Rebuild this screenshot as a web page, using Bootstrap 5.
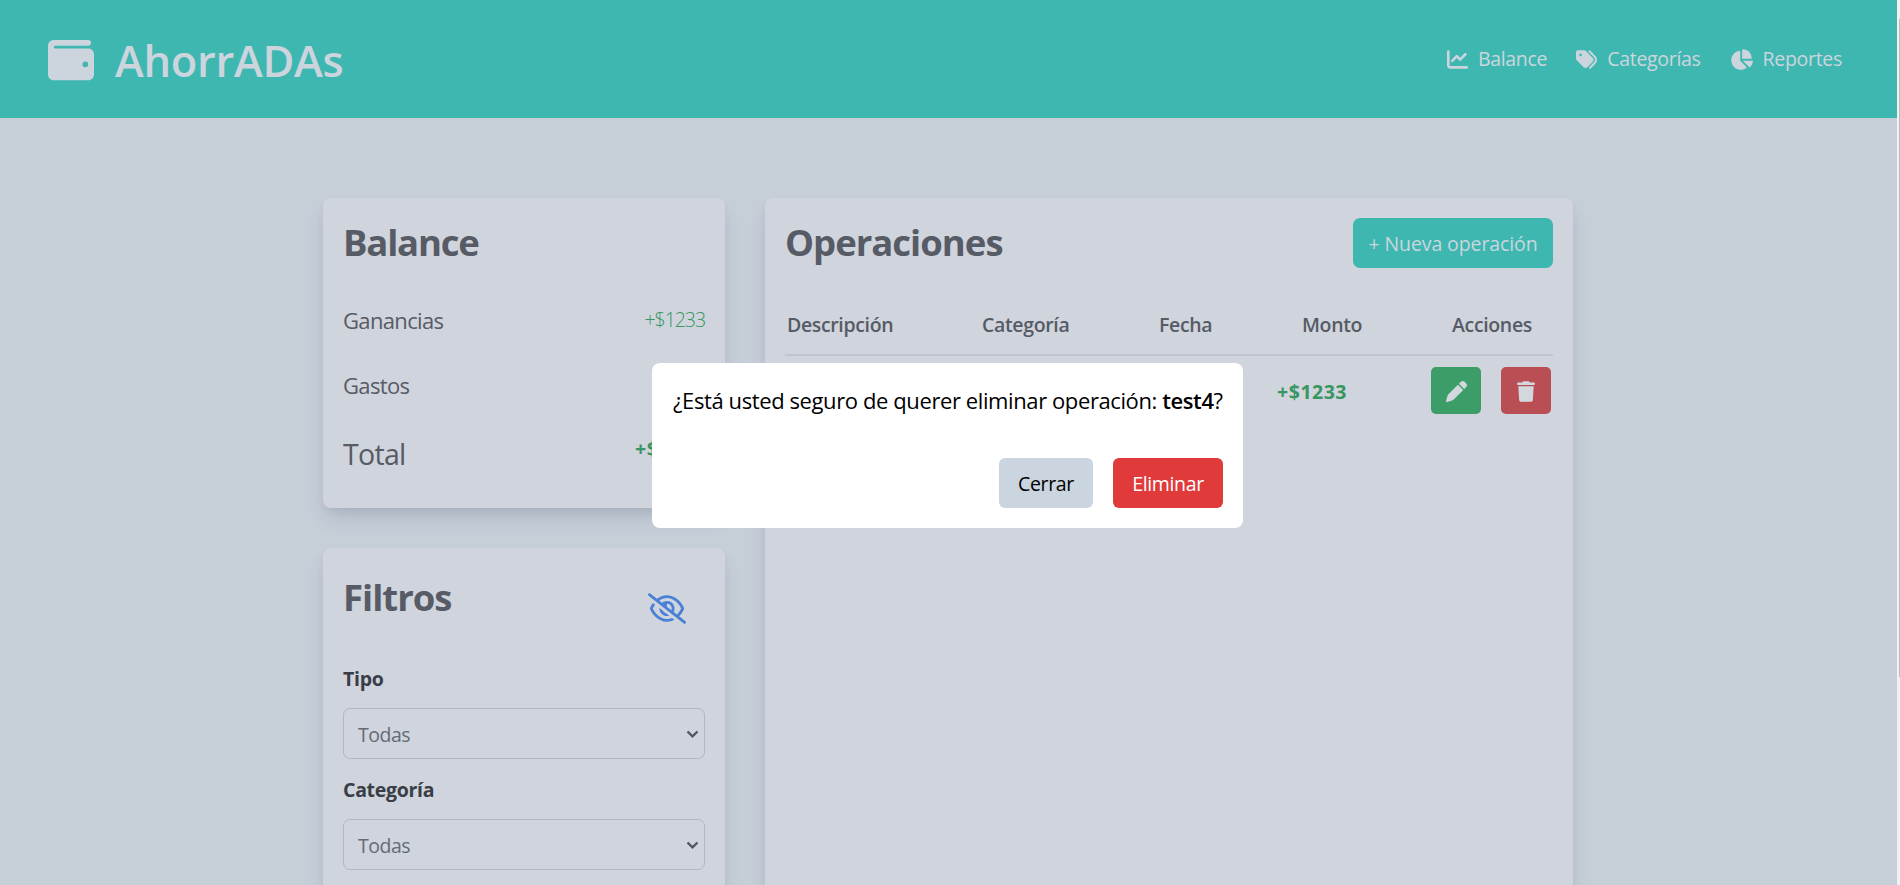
<!DOCTYPE html>
<html lang="es">
<head>
<meta charset="utf-8">
<meta name="viewport" content="width=device-width, initial-scale=1">
<title>AhorrADAs</title>
<link href="https://cdn.jsdelivr.net/npm/bootstrap@5.3.0/dist/css/bootstrap.min.css" rel="stylesheet">
<style>
  body { height: 885px; overflow: hidden; background: #c6ced8; color: #565b66; font-family: "Open Sans", "Noto Sans", sans-serif; font-size: 19.5px; line-height: 30px; letter-spacing: -.3px; white-space: nowrap; }
  svg { fill: currentColor; display: block; flex: none; }
  .page { width: 1897px; height: 885px; overflow: hidden; }
  .topbar { height: 118px; background: #3fb7b1; color: #ccd5dd; padding: 0 55px 0 48px; }
  .wallet { margin-top: 2px; }
  .brand-name { font-size: 43.5px; line-height: 60px; font-weight: 600; letter-spacing: -.3px; margin: 3px 0 0 21px; }
  .links { gap: 29px; }
  .links a { color: inherit; text-decoration: none; gap: 10px; }
  .main { padding: 80px 324px 0 323px; gap: 40px; }
  .side { width: 402px; gap: 40px; }
  .panel { background: #d0d4dc; border-radius: 8px; padding: 20px; box-shadow: 0 12px 19px -4px rgba(70,85,105,.19), 0 5px 8px -2px rgba(70,85,105,.08); }
  .balance { height: 310px; }
  .filters { height: 400px; }
  .ops { height: 760px; }
  .title { font-size: 36.5px; line-height: 48px; height: 50px; font-weight: 700; letter-spacing: -1px; margin: 0; }
  .balance .title { letter-spacing: -1.2px; }
  .filters .title { line-height: 50px; }
  .line { font-size: 22px; line-height: 32px; height: 34px; letter-spacing: -.65px; margin-bottom: 31px; }
  .line-first { margin-top: 36px; }
  .line-total { line-height: 40px; height: 40px; margin-bottom: 0; }
  .total { font-size: 28.5px; letter-spacing: -.7px; }
  .amount { font-size: 19.5px; line-height: 30px; color: #379663; letter-spacing: .5px; font-weight: 700; }
  .thin { font-weight: 300; letter-spacing: -1.05px; line-height: 31px; }
  .filters-head { height: 96px; }
  .eye { color: #4a80d6; margin: 25px 19px 0 0; }
  .field-name { font-weight: 700; color: #383d47; line-height: 30px; margin-bottom: 14px; }
  .picker { height: 51px; border: 1px solid #b1b8c3; border-radius: 7px; padding: 2px 5px 0 14px; color: #656b76; letter-spacing: -.5px; margin-bottom: 16px; }
  .picker svg { margin-top: -2px; }
  .add { width: 200px; height: 50px; border-radius: 7px; background: #3fb7b1; color: #c9d6dd; border: 0; padding: 0; letter-spacing: -.1px; }
  .btn { font-size: 19.5px; line-height: 30px; padding: 1px 0 0; }
  .heads { display: grid; grid-template-columns: 195px 177px 143px 150px auto; padding: 7px 0 0 2px; margin-top: 35px; font-weight: 600; letter-spacing: -.35px; height: 53px; border-bottom: 2px solid #bec5d1; }
  .op-row { height: 70px; padding-right: 2px; }
  .op-row .amount { margin: 21px 84px 0 0; }
  .act { width: 50px; height: 47px; border-radius: 5px; color: #d3d8df; margin-top: 11px; padding-top: 1px; }
  .edit { background: #3d9d68; margin-right: 20px; }
  .trash { background: #b94e54; }
  .veil { padding: 6px 2px 0 0; width: 1897px; height: 885px; }
  .dialog-box { width: 591px; height: 165px; background: #fff; color: #000; border-radius: 8px; padding: 19px 20px 20px 20px; }
  .question { font-size: 22px; line-height: 36px; letter-spacing: -.4px; padding-left: 1px; }
  .question b { font-weight: 600; }
  .choices { gap: 20px; }
  .choice { height: 50px; border-radius: 6px; border: 0; letter-spacing: -.35px; }
  .close-btn { width: 94px; background: #cbd5e0; color: #000; }
  .del-btn { width: 110px; background: #e03a3a; color: #fff; }
  .rail { width: 3px; height: 885px; background: #f1f1f1; padding: 19px 0 0 2px; }
  .thumb { height: 658px; background: #bdbdbd; }
</style>
</head>
<body>
<div class="d-flex">
<div class="page flex-shrink-0">
  <header class="topbar d-flex justify-content-between align-items-center">
    <div class="d-flex align-items-center">
      <svg class="wallet" width="46" height="46" viewBox="0 0 512 512"><path d="M64 32C28.7 32 0 60.7 0 96V416c0 35.3 28.7 64 64 64H448c35.3 0 64-28.7 64-64V192c0-35.3-28.7-64-64-64H80c-8.8 0-16-7.2-16-16s7.2-16 16-16H448c17.7 0 32-14.3 32-32s-14.3-32-32-32H64zM416 272a32 32 0 1 1 0 64 32 32 0 1 1 0-64z"/></svg>
      <span class="brand-name">AhorrADAs</span>
    </div>
    <nav class="links d-flex align-items-center">
      <a href="#" class="d-flex align-items-center"><svg width="21" height="21" viewBox="0 0 512 512"><path d="M64 64c0-17.7-14.3-32-32-32S0 46.3 0 64V400c0 44.2 35.8 80 80 80H480c17.7 0 32-14.3 32-32s-14.3-32-32-32H80c-8.8 0-16-7.2-16-16V64zm406.6 86.6c12.5-12.5 12.5-32.8 0-45.3s-32.8-12.5-45.3 0L320 210.7l-57.4-57.4c-12.5-12.5-32.8-12.5-45.3 0l-112 112c-12.5 12.5-12.5 32.8 0 45.3s32.8 12.5 45.3 0L240 221.3l57.4 57.4c12.5 12.5 32.8 12.5 45.3 0l128-128z"/></svg><span>Balance</span></a>
      <a href="#" class="d-flex align-items-center"><svg width="21" height="21" viewBox="0 0 512 512"><path d="M345 39.1L472.8 168.4c52.4 53 52.4 138.2 0 191.2L360.8 472.9c-9.3 9.4-24.5 9.5-33.9 .2s-9.5-24.5-.2-33.9L438.6 325.9c33.9-34.3 33.9-89.4 0-123.7L310.9 72.9c-9.3-9.4-9.2-24.6 .2-33.9s24.6-9.2 33.9 .2zM0 229.5V80C0 53.5 21.5 32 48 32H197.5c17 0 33.3 6.7 45.3 18.7l168 168c25 25 25 65.5 0 90.5L277.3 442.7c-25 25-65.5 25-90.5 0l-168-168C6.7 262.7 0 246.5 0 229.5zM144 144a32 32 0 1 0 -64 0 32 32 0 1 0 64 0z"/></svg><span>Categorías</span></a>
      <a href="#" class="d-flex align-items-center"><svg width="23" height="21" viewBox="0 0 576 512"><path d="M304 240V16.6c0-9 7-16.6 16-16.6C443.7 0 544 100.3 544 224c0 9-7.6 16-16.6 16H304zM32 272C32 150.7 122.1 50.3 239 34.3c9.2-1.3 17 6.1 17 15.4V288L412.5 444.5c6.7 6.7 6.2 17.7-1.5 23.1C371.8 495.6 323.8 512 272 512C139.5 512 32 404.6 32 272zm526.4 16c9.3 0 16.6 7.8 15.4 17c-7.7 55.9-34.6 105.6-73.9 142.3c-6 5.6-15.4 5.2-21.2-.7L320 288H558.4z"/></svg><span>Reportes</span></a>
    </nav>
  </header>
  <main class="main d-flex">
    <div class="side d-flex flex-column flex-shrink-0">
      <section class="panel balance">
        <h2 class="title">Balance</h2>
        <div class="line line-first d-flex justify-content-between"><span>Ganancias</span><span class="amount thin">+$1233</span></div>
        <div class="line">Gastos</div>
        <div class="line line-total d-flex justify-content-between"><span class="total">Total</span><span class="amount">+$1233</span></div>
      </section>
      <section class="panel filters">
        <div class="filters-head d-flex justify-content-between align-items-start">
          <h2 class="title pt-1">Filtros</h2>
          <svg class="eye" width="38" height="31" viewBox="0 0 640 512"><path d="M38.8 5.1C28.4-3.1 13.3-1.2 5.1 9.2S-1.2 34.7 9.2 42.9l592 464c10.4 8.2 25.5 6.3 33.7-4.1s6.3-25.5-4.1-33.7L525.6 386.7c39.6-40.6 66.4-86.1 79.9-118.4c3.3-7.9 3.3-16.7 0-24.6c-14.9-35.7-46.2-87.7-93-131.1C465.5 68.8 400.8 32 320 32c-68.2 0-125 26.3-169.3 60.8L38.8 5.1zm151 118.3C226 97.7 269.5 80 320 80c65.2 0 118.8 29.6 159.9 67.7C518.4 183.5 545 226 558.6 256c-12.6 28-36.6 66.8-70.9 100.9l-53.8-42.2c9.1-17.6 14.2-37.5 14.2-58.7c0-70.7-57.3-128-128-128c-32.2 0-61.7 11.9-84.2 31.5l-46.1-36.1zM394.9 284.2l-81.5-63.9c4.2-8.5 6.6-18.2 6.6-28.3c0-5.5-.7-10.9-2-16c.7 0 1.3 0 2 0c44.2 0 80 35.8 80 80c0 9.9-1.8 19.4-5.1 28.2zm9.4 130.3C378.8 425.4 350.7 432 320 432c-65.2 0-118.8-29.6-159.9-67.7C121.6 328.5 95 286 81.4 256c8.3-18.4 21.5-41.5 39.4-64.8L83.1 161.5C60.3 191.2 44 220.8 34.5 243.7c-3.3 7.9-3.3 16.7 0 24.6c14.9 35.7 46.2 87.7 93 131.1C174.5 443.2 239.2 480 320 480c47.8 0 89.9-12.9 126.2-32.5l-41.9-33zM192 256c0 70.7 57.3 128 128 128c13.3 0 26.1-2 38.2-5.8L302 334c-23.5-5.4-43.1-21.2-53.7-42.3l-56.1-44.2c-.2 2.8-.3 5.6-.3 8.5z"/></svg>
        </div>
        <div class="field-name">Tipo</div>
        <div class="picker d-flex align-items-center justify-content-between"><span>Todas</span><svg width="13" height="8" viewBox="0 0 13 8"><path d="M1.5 1.5l5 4.8 5-4.8" fill="none" stroke="#50555f" stroke-width="2.3"/></svg></div>
        <div class="field-name">Categoría</div>
        <div class="picker d-flex align-items-center justify-content-between"><span>Todas</span><svg width="13" height="8" viewBox="0 0 13 8"><path d="M1.5 1.5l5 4.8 5-4.8" fill="none" stroke="#50555f" stroke-width="2.3"/></svg></div>
      </section>
    </div>
    <section class="panel ops flex-fill">
      <div class="d-flex justify-content-between">
        <h2 class="title">Operaciones</h2>
        <button class="btn add">+ Nueva operación</button>
      </div>
      <div class="heads"><span>Descripción</span><span>Categoría</span><span>Fecha</span><span>Monto</span><span>Acciones</span></div>
      <div class="op-row d-flex justify-content-end align-items-start">
        <span class="amount">+$1233</span>
        <div class="act edit d-flex align-items-center justify-content-center"><svg width="21" height="21" viewBox="0 0 512 512"><path d="M362.7 19.3L314.3 67.7 444.3 197.7l48.4-48.4c25-25 25-65.5 0-90.5L453.3 19.3c-25-25-65.5-25-90.5 0zm-71 71L58.6 323.5c-10.4 10.4-18 23.3-22.2 37.4L1 481.2C-1.5 489.7 .8 498.8 7 505s15.3 8.5 23.7 6.1l120.3-35.4c14.1-4.2 27-11.8 37.4-22.2L421.7 220.3 291.7 90.3z"/></svg></div>
        <div class="act trash d-flex align-items-center justify-content-center"><svg width="18" height="21" viewBox="0 0 448 512"><path d="M135.2 17.7L128 32H32C14.3 32 0 46.3 0 64S14.3 96 32 96H416c17.7 0 32-14.3 32-32s-14.3-32-32-32H320l-7.2-14.3C307.4 6.8 296.3 0 284.2 0H163.8c-12.1 0-23.2 6.8-28.6 17.7zM416 128H32L53.2 467c1.6 25.3 22.6 45 47.9 45H346.9c25.3 0 46.3-19.7 47.9-45L416 128z"/></svg></div>
      </div>
    </section>
  </main>
</div>
<div class="rail flex-shrink-0"><div class="thumb"></div></div>
</div>
<div class="veil position-fixed top-0 start-0 d-flex align-items-center justify-content-center">
  <div class="dialog-box d-flex flex-column justify-content-between" role="dialog">
    <div class="question">¿Está usted seguro de querer eliminar operación: <b>test4</b>?</div>
    <div class="choices d-flex justify-content-end">
      <button class="btn choice close-btn">Cerrar</button>
      <button class="btn choice del-btn">Eliminar</button>
    </div>
  </div>
</div>
</body>
</html>
